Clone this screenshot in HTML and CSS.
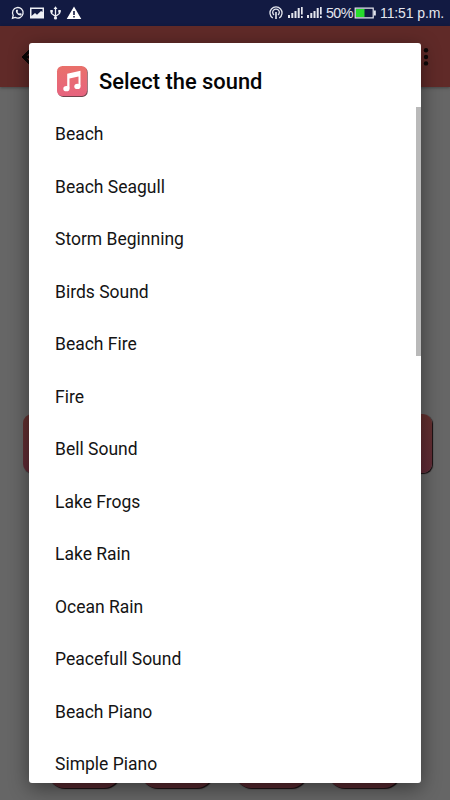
FILE: index.html
```html
<!DOCTYPE html>
<html lang="en">
<head>
<meta charset="utf-8">
<title>Select the sound</title>
<link rel="stylesheet" href="styles.css">
</head>
<body>
<div class="screen">
  <header class="status">
    <svg class="status-left" width="84" height="26" viewBox="0 0 84 26" fill="none" stroke="#eef0f5" stroke-width="1.3">
      <path d="M12.5 18.2l.7-2.8A5.3 5.3 0 1 1 15.2 17.4z"/>
      <path d="M16 10c-.8 2.8 2.3 6.2 5.5 5.2l.2-1.500-1.800-.7-.8.8-1.700-1.800.7-1-.7-1.500z" fill="#eef0f5" stroke="none"/>
      <path d="M30 7.500h14v11h-14z M31.500 9v7l3.500-3 2 1.700 4-3.700 1.500 1V9z" fill="#eef0f5" fill-rule="evenodd" stroke="none"/>
      <path d="M55.500 8v10M51.500 11.500v2l4 3 4-3v-2"/>
      <path d="M55.500 6.200l2 2.800h-4zM50.300 10h2.500v2.500h-2.500zM58.300 10h2.500v2.500h-2.500z" fill="#eef0f5" stroke="none"/>
      <circle cx="55.500" cy="18" r="1.600" fill="#eef0f5" stroke="none"/>
      <path d="M74 6.500l7.300 12.500H66.700zM73.200 11v4h1.600v-4zM73.200 16v1.600h1.600V16z" fill="#fff" fill-rule="evenodd" stroke="none"/>
    </svg>
    <div class="status-right">
      <svg width="56" height="26" viewBox="0 0 56 26" fill="none" stroke="#e4e6ee" stroke-width="1.3">
        <path d="M3.800 18A6 6 0 1 1 10.200 18M5 15A3.300 3.300 0 1 1 9 15"/>
        <path d="M7 12v7" stroke-width="1.600"/>
        <path d="M19 15h2v3h-2zM22.300 13h2v5h-2zM25.500 11h2v7h-2zM28.700 8h2v10h-2zM32 7h1.700v7.500H32zM32 16h1.700v2H32zM38 15h2v3h-2zM41.300 13h2v5h-2zM44.500 11h2v7h-2zM47.700 8h2v10h-2zM51 7h1.700v7.500H51zM51 16h1.700v2H51z" fill="#e4e6ee" stroke="none"/>
      </svg>
      <span class="percent">50%</span>
      <svg width="23" height="26" viewBox="0 0 23 26">
        <path d="M1.200 8.100h18v9.800h-18z" fill="none" stroke="#e4e6ee" stroke-width="1.200"/>
        <path d="M2 9h8.500v8H2z" fill="#27dc2c"/>
        <path d="M19.800 10.500h2v5h-2z" fill="#e4e6ee"/>
      </svg>
      <span class="time">11:51 p.m.</span>
    </div>
  </header>
  <div class="toolbar">
    <svg width="16" height="16" viewBox="0 0 16 16"><path d="M0 8l7-7 1.400 1.400L4 7h12v2H4l4.400 4.600L7 15z" fill="#0b0606" stroke="#0b0606"/></svg>
    <svg width="6" height="20" viewBox="0 0 6 20" fill="#0d0707"><circle cx="3" cy="3.300" r="2.200"/><circle cx="3" cy="10" r="2.200"/><circle cx="3" cy="16.400" r="2.200"/></svg>
  </div>
  <main class="page">
    <div class="wide-button"></div>
    <div class="tabs"><div></div><div></div><div></div><div></div></div>
  </main>
  <section class="dialog">
    <div class="dialog-head">
      <svg width="33" height="33" viewBox="0 0 33 33">
        <defs><linearGradient id="tile" x2="0" y2="1"><stop stop-color="#e9706a"/><stop offset="1" stop-color="#e7647f"/></linearGradient></defs>
        <rect x="1.700" y="1.900" width="30" height="30" rx="5.500" fill="#70434c"/>
        <rect x="1" y="1" width="30" height="30" rx="5.500" fill="url(#tile)"/>
        <path d="M11.200 8.700l13.300-2.900v15.500h-2V11.500l-9 2v10h-2.300z" fill="#fff"/>
        <ellipse cx="10.400" cy="23.700" rx="3.100" ry="2.600" fill="#fff"/>
        <ellipse cx="21.400" cy="21.400" rx="3.100" ry="2.600" fill="#fff"/>
      </svg>
      <h1>Select the sound</h1>
    </div>
    <div class="list">
      <ul>
        <li>Beach</li><li>Beach Seagull</li><li>Storm Beginning</li><li>Birds Sound</li><li>Beach Fire</li><li>Fire</li><li>Bell Sound</li><li>Lake Frogs</li><li>Lake Rain</li><li>Ocean Rain</li><li>Peacefull Sound</li><li>Beach Piano</li><li>Simple Piano</li>
      </ul>
      <div class="scrollbar"></div>
    </div>
  </section>
</div>
</body>
</html>
```
FILE: styles.css
```css
* { box-sizing: border-box; }
body { margin: 0; font-family: Roboto, sans-serif; }
.screen { position: relative; width: 450px; height: 800px; overflow: hidden; background: #666; display: flex; flex-direction: column; }
.status { height: 26px; background: #121a42; color: #e4e6ee; display: flex; justify-content: space-between; padding-right: 5px; flex: none; }
.status svg { display: block; flex: none; }
.status-right { display: flex; align-items: center; white-space: nowrap; }
.percent { width: 29px; padding-left: 1px; font: 14.3px/26px "Liberation Sans", sans-serif; letter-spacing: -.6px; }
.time { width: 65px; margin-left: 3px; font: 14px/26px "Liberation Sans", sans-serif; letter-spacing: -.1px; }
.toolbar { height: 61px; flex: none; background: #602a28; box-shadow: 0 1px 3px rgba(0,0,0,.35); display: flex; align-items: center; justify-content: space-between; padding: 0 21px 0 22px; }
.page { flex: 1; display: flex; flex-direction: column; justify-content: space-between; padding: 327px 18px 12px 23px; }
.wide-button { height: 59px; border-radius: 9px; background: linear-gradient(#63302e, #602a36); box-shadow: 1px 1px 1px #170c0e; }
.tabs { display: flex; justify-content: space-between; padding: 0 32px 0 25px; }
.tabs div { width: 72px; height: 60px; border-radius: 16px; background: #592a31; box-shadow: 1px 1px 1px #170c0e; }
.dialog { position: absolute; left: 29px; top: 43px; width: 392px; height: 740px; border-radius: 3px; background: #fff; box-shadow: 0 5px 20px rgba(0,0,0,.45); overflow: hidden; }
.dialog-head { height: 64px; padding: 6px 0 0 27px; display: flex; align-items: center; color: #050505; }
h1 { margin: 8px 0 0 10px; font-size: 21.9px; line-height: 28px; font-weight: 500; white-space: nowrap; }
.dialog-head svg { margin-top: 6px; flex: none; }
.list { display: flex; justify-content: space-between; }
ul { list-style: none; margin: 0; padding: 1px 0 0 26px; }
li { height: 52.5px; line-height: 53px; font-size: 17.5px; color: #141414; white-space: nowrap; }
.scrollbar { width: 5px; height: 249px; background: #b9b9b9; }
```
